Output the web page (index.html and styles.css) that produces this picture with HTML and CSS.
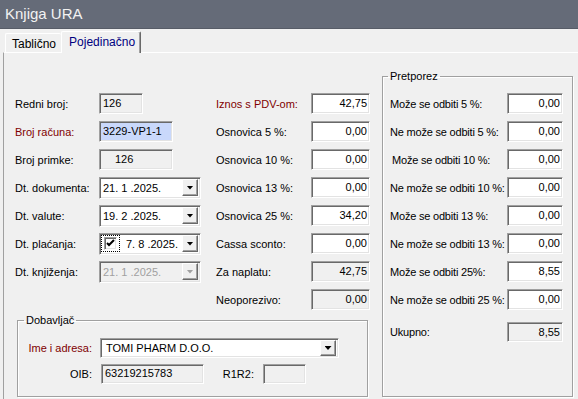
FILE: index.html
```html
<!DOCTYPE html>
<html lang="hr">
<head>
  <meta charset="UTF-8">
  <title>Knjiga URA</title>
  <link rel="stylesheet" href="styles.css">
</head>
<body>
  <div class="window">

    <!-- Naslov -->
    <div class="titlebar">Knjiga URA</div>

    <!-- Kartice -->
    <div class="tabs">
      <span class="tab">Tablično</span>
      <span class="tab active">Pojedinačno</span>
    </div>

    <div class="panel">
      <div class="main">
        <div class="fields">

          <!-- Lijevi stupac -->
          <div class="form-col left">
            <label>Redni broj:</label>
            <div class="box ro short">126</div>

            <label class="req">Broj računa:</label>
            <div class="box sel">3229-VP1-1</div>

            <label>Broj primke:</label>
            <div class="box ro indent">126</div>

            <label>Dt. dokumenta:</label>
            <div class="combo"><span class="combo-text">21. 1 .2025.</span><span class="drop"></span></div>

            <label>Dt. valute:</label>
            <div class="combo"><span class="combo-text">19. 2 .2025.</span><span class="drop"></span></div>

            <label>Dt. plaćanja:</label>
            <div class="combo">
              <span class="focus">
                <span class="check">
                  <svg width="9" height="9" viewBox="0 0 9 9"><path d="M1 4 L3 6 L8 1" fill="none" stroke="#000" stroke-width="2"/></svg>
                </span>
              </span>
              <span class="combo-text gap">7. 8 .2025.</span><span class="drop"></span>
            </div>

            <label>Dt. knjiženja:</label>
            <div class="combo disabled"><span class="combo-text">21. 1 .2025.</span><span class="drop"></span></div>
          </div>

          <!-- Srednji stupac -->
          <div class="form-col mid">
            <label class="req">Iznos s PDV-om:</label>
            <div class="box num">42,75</div>

            <label>Osnovica 5 %:</label>
            <div class="box num">0,00</div>

            <label>Osnovica 10 %:</label>
            <div class="box num">0,00</div>

            <label>Osnovica 13 %:</label>
            <div class="box num">0,00</div>

            <label>Osnovica 25 %:</label>
            <div class="box num">34,20</div>

            <label>Cassa sconto:</label>
            <div class="box num">0,00</div>

            <label>Za naplatu:</label>
            <div class="box num ro">42,75</div>

            <label>Neoporezivo:</label>
            <div class="box num ro">0,00</div>
          </div>
        </div>

        <!-- Dobavljač -->
        <fieldset class="group supplier">
          <legend>Dobavljač</legend>
          <div class="sup-body">
            <div class="sup-row">
              <label class="req sup-label">Ime i adresa:</label>
              <div class="combo wide"><span class="combo-text">TOMI PHARM D.O.O.</span><span class="drop"></span></div>
            </div>
            <div class="sup-row">
              <label class="sup-label">OIB:</label>
              <div class="box ro oib">63219215783</div>
              <label class="r1r2-label">R1R2:</label>
              <div class="box ro r1r2"></div>
            </div>
          </div>
        </fieldset>
      </div>

      <!-- Pretporez -->
      <fieldset class="group pretporez">
        <legend>Pretporez</legend>
        <div class="pp-grid">
          <label>Može se odbiti 5 %:</label>
          <div class="box num">0,00</div>
          <label>Ne može se odbiti 5 %:</label>
          <div class="box num">0,00</div>
          <label class="nudge">Može se odbiti 10 %:</label>
          <div class="box num">0,00</div>
          <label>Ne može se odbiti 10 %:</label>
          <div class="box num">0,00</div>
          <label>Može se odbiti 13 %:</label>
          <div class="box num">0,00</div>
          <label>Ne može se odbiti 13 %:</label>
          <div class="box num">0,00</div>
          <label>Može se odbiti 25%:</label>
          <div class="box num">8,55</div>
          <label>Ne može se odbiti 25 %:</label>
          <div class="box num">0,00</div>
        </div>
        <div class="pp-grid total">
          <label>Ukupno:</label>
          <div class="box num ro">8,55</div>
        </div>
      </fieldset>
    </div>
  </div>
</body>
</html>
```

FILE: styles.css
```css
body {
  margin: 0;
  font-family: "Liberation Sans", Arial, sans-serif;
  font-size: 11px;
  color: #000;
  background-color: #f0f0f0;
}

.window {
  width: 578px;
  height: 399px;
  overflow: hidden;
  display: flex;
  flex-direction: column;
  background-color: #f0f0f0;
}

/* Naslov */
.titlebar {
  flex: none;
  height: 28px;
  line-height: 28px;
  padding-left: 5px;
  background-color: #656b78;
  border-bottom: 1px solid #575c67;
  color: #f2f2f2;
  font-size: 15px;
}

/* Kartice */
.tabs {
  flex: none;
  height: 23px;
  display: flex;
  align-items: flex-end;
  padding-left: 5px;
  position: relative;
  z-index: 1;
}

.tab {
  box-sizing: border-box;
  height: 19px;
  padding: 3px 5px 0 6px;
  line-height: 15px;
  font-size: 12px;
  border-top: 1px solid #fff;
  border-left: 1px solid #fff;
  border-radius: 2px 2px 0 0;
  white-space: nowrap;
}

.tab.active {
  height: 22px;
  margin-bottom: -1px;
  padding: 3px 5px 0 7px;
  color: #000080;
  background-color: #f0f0f0;
  border-right: 1px solid #696969;
  box-shadow: inset -1px 0 0 #a0a0a0;
}

.panel {
  flex: 1;
  display: flex;
  margin-left: 3px;
  border-top: 1px solid #fff;
  border-left: 1px solid #a0a0a0;
}

.main {
  width: 378px;
  flex: none;
  display: flex;
  flex-direction: column;
  padding-top: 40px;
  box-sizing: border-box;
}

.fields {
  display: flex;
}

.form-col {
  display: grid;
  grid-auto-rows: 21px;
  row-gap: 7px;
  align-items: center;
  justify-items: start;
}

.form-col.left {
  margin-left: 11px;
  width: 201px;
  grid-template-columns: 84px 117px;
}

.form-col.mid {
  grid-template-columns: 95px 59px;
}

label {
  white-space: nowrap;
}

.req {
  color: #800000;
}

/* Polja */
.box {
  box-sizing: border-box;
  width: 74px;
  height: 21px;
  line-height: 19px;
  padding: 0 3px;
  background-color: #fff;
  border: 1px solid;
  border-color: #a0a0a0 #fff #fff #a0a0a0;
  box-shadow: inset 1px 1px 0 #696969, inset -1px -1px 0 #e3e3e3;
  white-space: nowrap;
  overflow: hidden;
}

.form-col.mid .box {
  width: 59px;
}

.box.short {
  width: 44px;
}

.box.indent {
  padding-left: 15px;
}

.box.num {
  text-align: right;
  padding-right: 2px;
}

.box.ro {
  background-color: #f0f0f0;
}

.box.sel {
  background-color: #c9d8fb;
}

/* Padajući izbornik */
.combo {
  box-sizing: border-box;
  width: 102px;
  height: 22px;
  display: flex;
  align-items: center;
  padding: 2px 2px 2px 3px;
  background-color: #fff;
  border: 1px solid;
  border-color: #a0a0a0 #fff #fff #a0a0a0;
  box-shadow: inset 1px 1px 0 #696969, inset -1px -1px 0 #e3e3e3;
  white-space: nowrap;
}

.combo-text {
  flex: 1;
}

.combo-text.gap {
  margin-left: 6px;
}

.drop {
  box-sizing: border-box;
  width: 16px;
  height: 17px;
  display: flex;
  align-items: center;
  justify-content: center;
  background-color: #f0f0f0;
  border: 1px solid;
  border-color: #fff #696969 #696969 #fff;
  box-shadow: inset -1px -1px 0 #a0a0a0;
}

.drop::after {
  content: "";
  width: 7px;
  height: 4px;
  background-color: #000;
  clip-path: polygon(0 0, 100% 0, 50% 100%);
}

.combo.disabled {
  background-color: #f0f0f0;
  color: #a0a0a0;
}

.combo.disabled .drop::after {
  background-color: #a0a0a0;
}

.focus {
  width: 19px;
  height: 17px;
  box-sizing: border-box;
  border: 1px dotted #000;
  margin-left: -2px;
  display: flex;
  align-items: center;
  justify-content: center;
}

.check {
  box-sizing: border-box;
  width: 13px;
  height: 13px;
  display: flex;
  align-items: center;
  justify-content: center;
  background-color: #fff;
  border: 1px solid;
  border-color: #a0a0a0 #fff #fff #a0a0a0;
  box-shadow: inset 1px 1px 0 #696969, inset -1px -1px 0 #e3e3e3;
}

/* Grupe */
.group {
  box-sizing: border-box;
  margin: 0;
  padding: 0;
  min-width: 0;
  border: 1px solid #a0a0a0;
  box-shadow: inset 1px 1px 0 #fff, 1px 1px 0 #fff;
}

.group legend {
  padding: 0 2px;
  line-height: 13px;
  font-size: 11px;
}

.supplier {
  flex: 1;
  width: 351px;
  margin: 4px 0 2px 13px;
}

.supplier legend {
  margin-left: 6px;
}

.sup-body {
  padding-top: 11px;
  display: flex;
  flex-direction: column;
  gap: 6px;
}

.sup-row {
  display: flex;
  align-items: center;
  height: 20px;
}

.sup-label {
  width: 74px;
  text-align: right;
  margin-right: 8px;
}

.combo.wide {
  width: 239px;
  height: 20px;
  padding: 1px 2px 1px 5px;
}

.combo.wide .drop {
  height: 16px;
}

.box.oib {
  width: 103px;
  height: 20px;
  line-height: 16px;
  margin-left: 1px;
}

.r1r2-label {
  width: 50px;
  text-align: right;
  margin-right: 9px;
}

.box.r1r2 {
  width: 43px;
  height: 20px;
}

.pretporez {
  flex: none;
  width: 191px;
  margin: 17px 0 2px 0;
}

.pretporez legend {
  margin-left: 5px;
}

.pp-grid {
  display: grid;
  grid-template-columns: 117px 56px;
  grid-auto-rows: 21px;
  row-gap: 7px;
  align-items: center;
  padding: 10px 0 0 7px;
}

.pp-grid label {
  letter-spacing: -0.2px;
}

.pp-grid .box {
  width: 56px;
}

.pp-grid .nudge {
  padding-left: 2px;
}

.pp-grid.total {
  padding-top: 12px;
  grid-auto-rows: 20px;
}

.pp-grid.total .box {
  height: 20px;
  line-height: 18px;
}
```
